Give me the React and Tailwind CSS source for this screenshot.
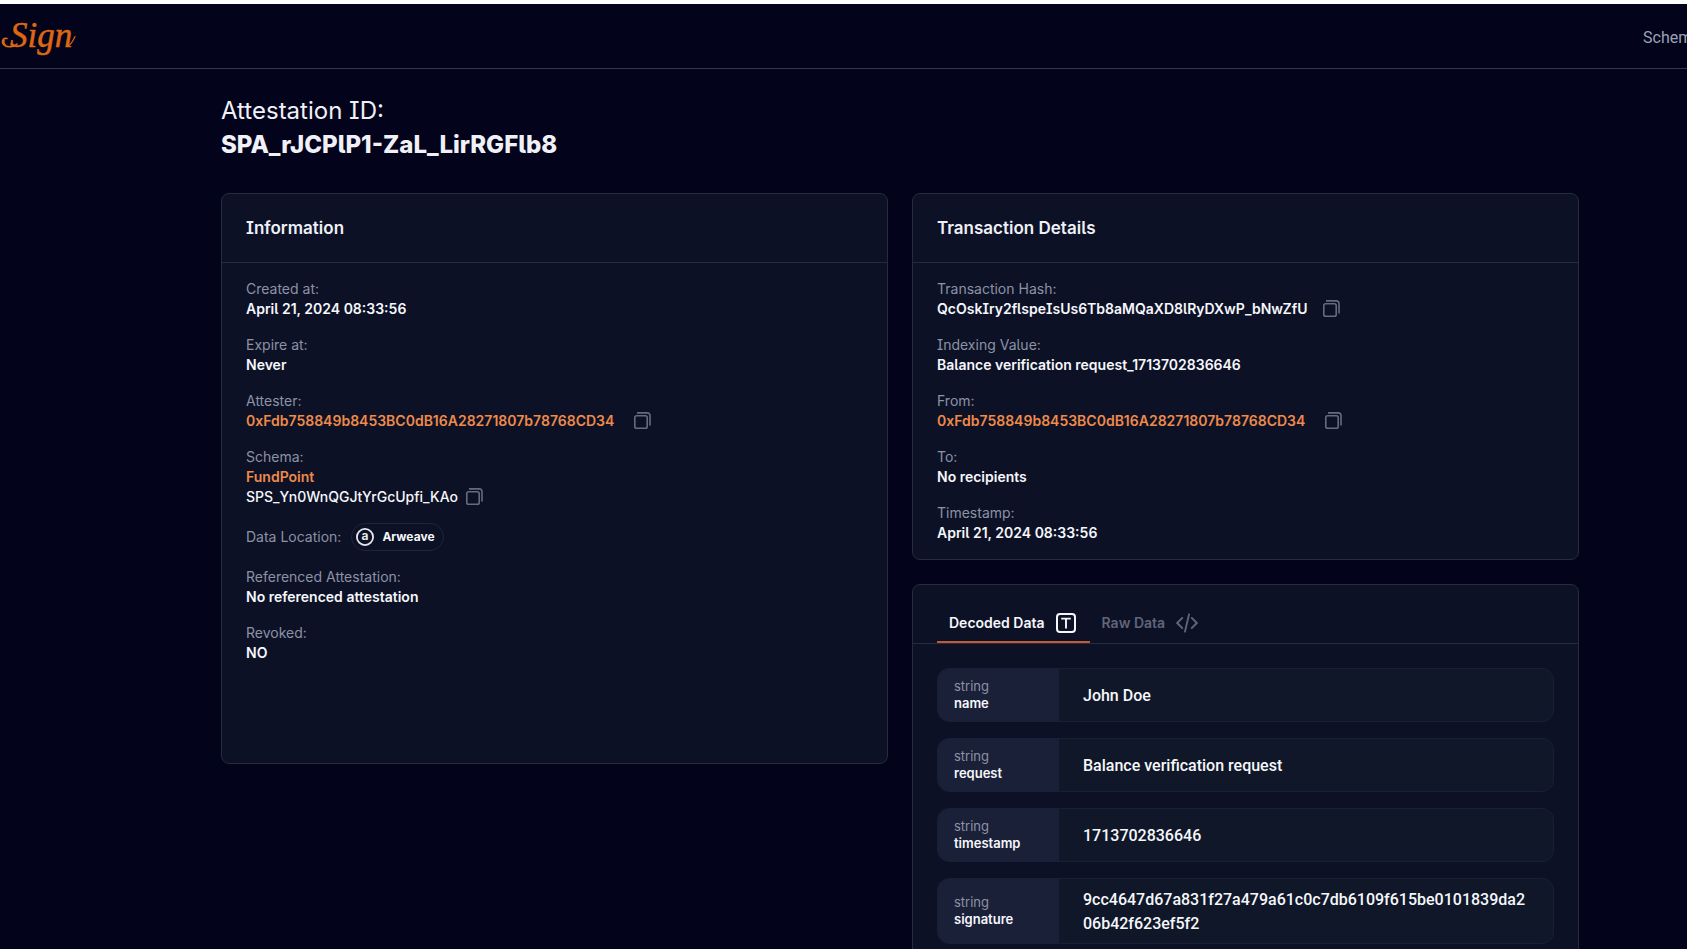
import React, { useState } from 'react'

function Logo() {
  return (
    <svg width="78" height="44" viewBox="0 0 78 44" role="img" aria-label="Sign" className="block">
      <g fill="none" stroke="#dd6713" strokeLinecap="round">
        <path d="M7 22.5 C2.5 21.5 1.2 26 4 28.8 C7.5 32 14 31 17 28" strokeWidth="1.6" />
        <path d="M3.8 24.4 C2.9 26 3.2 27.4 4.6 28.6" strokeWidth="2.2" />
        <path d="M68 30 C71 28.5 73 25 75 20.5" strokeWidth="1.2" />
      </g>
      <text
        x="10"
        y="31"
        fill="#dd6713"
        stroke="#dd6713"
        strokeWidth="0.5"
        className="font-['Liberation_Serif',serif] text-[35px] italic"
      >
        Sign
      </text>
    </svg>
  )
}

function CopyButton({ label }) {
  return (
    <button type="button" aria-label={label} className="shrink-0 text-[#666b7f]">
      <svg width="17" height="18" viewBox="0 0 17 18" fill="none" stroke="currentColor" strokeWidth="1.6">
        <rect x="0.8" y="3.8" width="12.4" height="12.4" rx="1.8" />
        <path d="M3 0.9 H13.4 A2.6 2.6 0 0 1 16 3.5 V13.4" />
      </svg>
    </button>
  )
}

function TextIcon() {
  return (
    <svg width="20" height="20" viewBox="0 0 20 20" fill="none" stroke="currentColor" strokeWidth="2" aria-hidden="true">
      <rect x="1" y="1" width="18" height="18" rx="3" />
      <path d="M5.2 5.6 H14.8 M10 5.6 V15.4" strokeWidth="1.9" />
    </svg>
  )
}

function CodeIcon() {
  return (
    <svg width="22" height="20" viewBox="0 0 22 20" fill="none" stroke="currentColor" strokeWidth="1.9" aria-hidden="true">
      <path d="M6.8 4.4 L1.2 10 L6.8 15.6 M15.2 4.4 L20.8 10 L15.2 15.6 M13.2 0.6 L8.8 19.4" />
    </svg>
  )
}

function ArweaveIcon() {
  return (
    <svg width="18" height="18" viewBox="0 0 18 18" fill="none" aria-hidden="true">
      <circle cx="9" cy="9" r="8.1" stroke="#e6e8ef" strokeWidth="1.8" />
      <text x="9" y="12.4" textAnchor="middle" fill="#e6e8ef" className="font-['Inter',sans-serif] text-[12px] font-bold">
        a
      </text>
    </svg>
  )
}

function Card({ title, className = '', children }) {
  return (
    <section className={`rounded-lg border border-[#262b3e] bg-[#0c1126] ${className}`}>
      <h2 className="flex h-[69px] items-center border-b border-[#262b3e] px-6 text-[17px] font-semibold text-[#eef0f6]">
        {title}
      </h2>
      <dl className="flex flex-col gap-4 px-6 py-4">{children}</dl>
    </section>
  )
}

function Field({ label, children }) {
  return (
    <div>
      <dt className="text-[#8d92a5]">{label}</dt>
      <dd className="font-semibold text-[#f6f7fb]">{children}</dd>
    </div>
  )
}

const ADDRESS = '0xFdb758849b8453BC0dB16A28271807b78768CD34'

function Address() {
  return (
    <div className="flex h-5 items-center gap-5">
      <a href="#address" className="text-[#ee8a4a]">{ADDRESS}</a>
      <CopyButton label="Copy address" />
    </div>
  )
}

const rows = [
  { type: 'string', name: 'name', value: 'John Doe' },
  { type: 'string', name: 'request', value: 'Balance verification request' },
  { type: 'string', name: 'timestamp', value: '1713702836646' },
  { type: 'string', name: 'signature', value: '9cc4647d67a831f27a479a61c0c7db6109f615be0101839da206b42f623ef5f2' },
]

const tabs = [
  { id: 'decoded', label: 'Decoded Data', Icon: TextIcon },
  { id: 'raw', label: 'Raw Data', Icon: CodeIcon },
]

function DataCard() {
  const [tab, setTab] = useState('decoded')
  return (
    <section className="rounded-lg border border-[#262b3e] bg-[#0c1126]">
      <div role="tablist" className="flex border-b border-[#262b3e] px-6 pt-[18px]">
        {tabs.map(({ id, label, Icon }) => (
          <button
            key={id}
            type="button"
            role="tab"
            aria-selected={tab === id}
            onClick={() => setTab(id)}
            className={`flex h-10 items-center gap-[11px] border-b-2 pt-0.5 pr-[14px] pl-3 font-semibold ${
              tab === id ? 'border-[#c25a38] text-[#f6f7fb]' : 'border-transparent text-[#60657a]'
            }`}
          >
            {label}
            <Icon />
          </button>
        ))}
      </div>
      {tab === 'decoded' ? (
        <dl className="flex flex-col gap-4 p-6">
          {rows.map((row) => (
            <div key={row.name} className="flex min-h-[54px] overflow-hidden rounded-xl border border-[#192035] bg-[#0f1729]">
              <dt className="flex w-[121px] shrink-0 flex-col justify-center bg-[#1a2038] px-4 text-[13px] leading-[17px]">
                <span className="text-[#8d92a5]">{row.type}</span>
                <span className="font-semibold text-[#f6f7fb]">{row.name}</span>
              </dt>
              <dd className="flex flex-1 items-center break-all pt-[9px] pr-5 pb-[7px] pl-6 font-['Roboto',sans-serif] text-base font-medium text-[#f6f7fb]">
                {row.value}
              </dd>
            </div>
          ))}
        </dl>
      ) : (
        <pre className="p-6 text-[#f6f7fb]">{JSON.stringify(rows, null, 2)}</pre>
      )}
    </section>
  )
}

export default function App() {
  return (
    <div className="min-h-screen overflow-x-hidden border-t-4 border-white bg-[#03031b] font-['Inter',sans-serif] text-sm [font-feature-settings:'cv05','cv08']">
      <header className="flex h-[65px] items-center justify-between border-b border-[#36384c] pt-1">
        <a href="#home"><Logo /></a>
        <nav className="w-11 overflow-hidden whitespace-nowrap font-['Roboto',sans-serif] text-base text-[#9ea2b5]">
          <a href="#schemas">Schem</a>
        </nav>
      </header>

      <main className="mr-[108px] ml-[221px] pt-[25px] pb-6">
        <h1 className="mb-[31px] text-2xl leading-[34px] text-[#f0f1f7]">
          Attestation ID:
          <span className="block font-extrabold">SPA_rJCPlP1-ZaL_LirRGFlb8</span>
        </h1>

        <div className="grid grid-cols-2 items-start gap-6">
          <Card title="Information" className="min-h-[571px]">
            <Field label="Created at:">April 21, 2024 08:33:56</Field>
            <Field label="Expire at:">Never</Field>
            <Field label="Attester:"><Address /></Field>
            <Field label="Schema:">
              <a href="#schema" className="text-[#ee8a4a]">FundPoint</a>
              <div className="flex h-5 items-center gap-2 font-medium">
                SPS_Yn0WnQGJtYrGcUpfi_KAo
                <CopyButton label="Copy schema ID" />
              </div>
            </Field>
            <div className="flex items-center gap-[10px]">
              <dt className="text-[#8d92a5]">Data Location:</dt>
              <dd className="flex h-7 items-center gap-2 rounded-full border border-[#20253a] pr-2 pl-1 text-xs font-bold text-[#f6f7fb]">
                <ArweaveIcon />
                Arweave
              </dd>
            </div>
            <Field label="Referenced Attestation:">No referenced attestation</Field>
            <Field label="Revoked:">NO</Field>
          </Card>

          <div className="flex min-w-0 flex-col gap-6">
            <Card title="Transaction Details">
              <Field label="Transaction Hash:">
                <div className="flex h-5 items-center gap-4">
                  QcOskIry2flspeIsUs6Tb8aMQaXD8lRyDXwP_bNwZfU
                  <CopyButton label="Copy transaction hash" />
                </div>
              </Field>
              <Field label="Indexing Value:">Balance verification request_1713702836646</Field>
              <Field label="From:"><Address /></Field>
              <Field label="To:">No recipients</Field>
              <Field label="Timestamp:">April 21, 2024 08:33:56</Field>
            </Card>
            <DataCard />
          </div>
        </div>
      </main>
    </div>
  )
}
